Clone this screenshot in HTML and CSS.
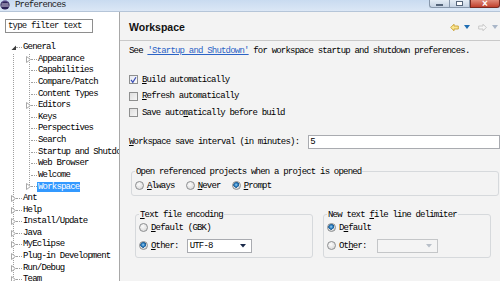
FILE: index.html
```html
<!DOCTYPE html>
<html>
<head>
<meta charset="utf-8">
<link rel="stylesheet" href="styles.css">
</head>
<body>
<div class="window">
  <div class="titlebar">
    <svg class="app-icon" width="10" height="10" viewBox="0 0 10 10"><circle cx="5" cy="5" r="4.6" fill="#2c2458"/><path d="M1.5 4 H8.5 M1.2 6 H8.8" stroke="#e8e4f4" stroke-width="0.9"/><path d="M2 2.2 A4 4 0 0 1 8 2.2" stroke="#8a7fc0" stroke-width="0.8" fill="none"/></svg>
    <span class="title">Preferences</span>
    <div class="controls">
      <span class="btn min"><span class="bar"></span></span>
      <span class="btn max"><span class="sq"></span></span>
      <span class="btn close">×</span>
    </div>
  </div>
  <div class="main">
    <div class="left">
      <div class="filter">type filter text</div>
      <div class="tree">
        <div class="row root">
          <svg class="twisty" width="5" height="7" viewBox="0 0 5 7"><path d="M5 1.5 L5 6 L0.5 6 Z" fill="#3a3a3a"/></svg>
          <span class="dash"></span><span class="label">General</span>
        </div>
        <div class="root-body">
          <div class="children">
            <div class="row child"><svg class="twisty" width="5" height="7" viewBox="0 0 5 7"><path d="M0.5 0.5 L4.5 3.5 L0.5 6.5 Z" fill="#fff" stroke="#a8a8a8"/></svg><span class="dash"></span><span class="label">Appearance</span></div>
            <div class="row child"><span class="twisty"></span><span class="dash"></span><span class="label">Capabilities</span></div>
            <div class="row child"><span class="twisty"></span><span class="dash"></span><span class="label">Compare/Patch</span></div>
            <div class="row child"><span class="twisty"></span><span class="dash"></span><span class="label">Content Types</span></div>
            <div class="row child"><svg class="twisty" width="5" height="7" viewBox="0 0 5 7"><path d="M0.5 0.5 L4.5 3.5 L0.5 6.5 Z" fill="#fff" stroke="#a8a8a8"/></svg><span class="dash"></span><span class="label">Editors</span></div>
            <div class="row child"><span class="twisty"></span><span class="dash"></span><span class="label">Keys</span></div>
            <div class="row child"><span class="twisty"></span><span class="dash"></span><span class="label">Perspectives</span></div>
            <div class="row child"><span class="twisty"></span><span class="dash"></span><span class="label">Search</span></div>
            <div class="row child"><span class="twisty"></span><span class="dash"></span><span class="label">Startup and Shutdown</span></div>
            <div class="row child"><span class="twisty"></span><span class="dash"></span><span class="label">Web Browser</span></div>
            <div class="row child"><span class="twisty"></span><span class="dash"></span><span class="label">Welcome</span></div>
            <div class="row child"><svg class="twisty" width="5" height="7" viewBox="0 0 5 7"><path d="M0.5 0.5 L4.5 3.5 L0.5 6.5 Z" fill="#fff" stroke="#a8a8a8"/></svg><span class="dash"></span><span class="label selected">Workspace</span></div>
          </div>
          <div class="row root"><svg class="twisty" width="5" height="7" viewBox="0 0 5 7"><path d="M0.5 0.5 L4.5 3.5 L0.5 6.5 Z" fill="#fff" stroke="#a8a8a8"/></svg><span class="dash"></span><span class="label">Ant</span></div>
          <div class="row root"><svg class="twisty" width="5" height="7" viewBox="0 0 5 7"><path d="M0.5 0.5 L4.5 3.5 L0.5 6.5 Z" fill="#fff" stroke="#a8a8a8"/></svg><span class="dash"></span><span class="label">Help</span></div>
          <div class="row root"><svg class="twisty" width="5" height="7" viewBox="0 0 5 7"><path d="M0.5 0.5 L4.5 3.5 L0.5 6.5 Z" fill="#fff" stroke="#a8a8a8"/></svg><span class="dash"></span><span class="label">Install/Update</span></div>
          <div class="row root"><svg class="twisty" width="5" height="7" viewBox="0 0 5 7"><path d="M0.5 0.5 L4.5 3.5 L0.5 6.5 Z" fill="#fff" stroke="#a8a8a8"/></svg><span class="dash"></span><span class="label">Java</span></div>
          <div class="row root"><svg class="twisty" width="5" height="7" viewBox="0 0 5 7"><path d="M0.5 0.5 L4.5 3.5 L0.5 6.5 Z" fill="#fff" stroke="#a8a8a8"/></svg><span class="dash"></span><span class="label">MyEclipse</span></div>
          <div class="row root"><svg class="twisty" width="5" height="7" viewBox="0 0 5 7"><path d="M0.5 0.5 L4.5 3.5 L0.5 6.5 Z" fill="#fff" stroke="#a8a8a8"/></svg><span class="dash"></span><span class="label">Plug-in Development</span></div>
          <div class="row root"><svg class="twisty" width="5" height="7" viewBox="0 0 5 7"><path d="M0.5 0.5 L4.5 3.5 L0.5 6.5 Z" fill="#fff" stroke="#a8a8a8"/></svg><span class="dash"></span><span class="label">Run/Debug</span></div>
          <div class="row root"><svg class="twisty" width="5" height="7" viewBox="0 0 5 7"><path d="M0.5 0.5 L4.5 3.5 L0.5 6.5 Z" fill="#fff" stroke="#a8a8a8"/></svg><span class="dash"></span><span class="label">Team</span></div>
        </div>
      </div>
    </div>
    <div class="right">
      <div class="header">
        <span class="heading">Workspace</span>
        <div class="nav">
          <svg width="9" height="9" viewBox="0 0 9 9"><path d="M0.7 4.5 L4 1.2 V3 H8.3 V6 H4 V7.8 Z" fill="#fbe690" stroke="#c9a032" stroke-width="0.9" stroke-linejoin="round"/></svg>
          <svg class="drop" width="6" height="4" viewBox="0 0 6 4"><path d="M0 0 H6 L3 4 Z" fill="#1f6db3"/></svg>
          <svg class="fwd" width="9" height="9" viewBox="0 0 9 9"><path d="M8.3 4.5 L5 1.2 V3 H0.7 V6 H5 V7.8 Z" fill="#f6f6f6" stroke="#c4c4c4" stroke-width="0.9" stroke-linejoin="round"/></svg>
          <svg class="drop" width="6" height="4" viewBox="0 0 6 4"><path d="M0 0 H6 L3 4 Z" fill="#a9b6c8"/></svg>
        </div>
      </div>
      <div class="content">
        <div class="line see">See <a class="link">'Startup and Shutdown'</a> for workspace startup and shutdown preferences.</div>
        <div class="line check first"><span class="cb checked"><svg width="8" height="8" viewBox="0 0 8 8"><path d="M1.2 3.8 L3.2 6.6 L6.8 0.8" fill="none" stroke="#3b4fb5" stroke-width="1.4"/></svg></span><span><u>B</u>uild automatically</span></div>
        <div class="line check"><span class="cb"></span><span><u>R</u>efresh automatically</span></div>
        <div class="line check"><span class="cb"></span><span>Save auto<u>m</u>atically before build</span></div>
        <div class="interval"><span><u>W</u>orkspace save interval (in minutes):</span><span class="input">5</span></div>
        <fieldset class="group g1">
          <legend>Open referenced projects when a project is opened</legend>
          <div class="radios">
            <span class="opt"><span class="radio"></span><u>A</u>lways</span>
            <span class="opt"><span class="radio"></span><u>N</u>ever</span>
            <span class="opt"><span class="radio on"></span><u>P</u>rompt</span>
          </div>
        </fieldset>
        <div class="groups">
          <fieldset class="group g2">
            <legend><u>T</u>ext file encoding</legend>
            <div class="opt r1"><span class="radio"></span><u>D</u>efault (GBK)</div>
            <div class="opt r2"><span class="radio on"></span><u>O</u>ther:<span class="combo">UTF-8<svg width="6" height="4" viewBox="0 0 6 4"><path d="M0 0 H6 L3 3.5 Z" fill="#1a2a4a"/></svg></span></div>
          </fieldset>
          <fieldset class="group g3">
            <legend>New text <u>f</u>ile line delimiter</legend>
            <div class="opt r1"><span class="radio on"></span>D<u>e</u>fault</div>
            <div class="opt r2"><span class="radio"></span>Ot<u>h</u>er:<span class="combo disabled"><svg width="6" height="4" viewBox="0 0 6 4"><path d="M0 0 H6 L3 3.5 Z" fill="#b8bfc8"/></svg></span></div>
          </fieldset>
        </div>
      </div>
    </div>
  </div>
</div>
</body>
</html>
```

FILE: styles.css
```css
* { box-sizing: border-box; }
html, body { margin: 0; padding: 0; }
body {
  width: 500px; height: 281px; overflow: hidden;
  background: #f3f3f3;
  font-family: "Liberation Mono", "DejaVu Sans Mono", monospace;
  font-size: 9px; letter-spacing: -0.8px; color: #000;
}
u { text-decoration: underline; text-underline-offset: 1px; }
.window { width: 500px; height: 281px; display: flex; flex-direction: column; }

.titlebar {
  height: 12px; flex: none; display: flex; align-items: flex-start;
  background: linear-gradient(#c9dbf0, #dbe7f6);
  border-bottom: 1px solid #b5c5d8;
}
.app-icon { margin-top: 0; flex: none; }
.title { margin-left: 5px; line-height: 11px; color: #1a1a1a; }
.controls { margin-left: auto; display: flex; height: 8px; }
.btn { height: 8px; display: flex; align-items: center; justify-content: center; }
.min, .max {
  width: 20px; background: linear-gradient(#e4ecf5, #c5d3e3);
  border: 1px solid #8797ab; border-top: none;
}
.min { border-radius: 0 0 0 3px; border-right: none; }
.max { width: 21px; }
.bar { width: 7px; height: 2px; border: 1px solid #55657a; background: #fff; margin-top: 2px; }
.sq { width: 7px; height: 5px; border: 1px solid #55657a; background: #fff; }
.close {
  width: 30px; background: linear-gradient(#e08a7a, #c0402e);
  border: 1px solid #7a2a22; border-top: none; border-radius: 0 0 3px 0;
  color: #fff; font-family: "Liberation Sans", sans-serif; font-weight: bold;
  font-size: 10px; line-height: 7px; letter-spacing: 0; overflow: hidden;
}

.main { flex: 1; display: flex; min-height: 0; }
.left {
  width: 120px; flex: none; background: #fff;
  border-right: 1px solid #a8a8a8;
  padding-top: 7px; overflow: hidden;
}
.filter {
  margin-left: 5px; width: 88px; height: 14px;
  border: 1px solid #8e8e8e; background: #fff;
  padding-left: 2px; line-height: 12px; color: #111;
}
.tree { margin-top: 9px; }
.row { display: flex; align-items: center; height: 11.6px; white-space: nowrap; }
.twisty { width: 5px; height: 7px; flex: none; }
.dash { width: 6px; flex: none; border-top: 1px dotted #a0a0a0; }
.label { margin-left: 1px; line-height: 11px; }
.root { padding-left: 11px; }
.child { padding-left: 26px; }
.root-body {
  background: repeating-linear-gradient(to bottom, #a0a0a0 0 1px, transparent 1px 2px) 13px 0 / 1px 100% no-repeat;
}
.children {
  background: repeating-linear-gradient(to bottom, #a0a0a0 0 1px, transparent 1px 2px) 29px 0 / 1px calc(100% - 6px) no-repeat;
}
.selected { background: #3399ff; color: #fff; padding: 0 1px; margin-left: 0; line-height: 10px; }

.right { flex: 1; display: flex; flex-direction: column; min-width: 0; }
.header {
  height: 29px; flex: none; display: flex; align-items: center;
  padding: 0 2px 0 9px; border-bottom: 1px solid #c9c9c9;
}
.heading {
  font-family: "Liberation Sans", Arial, sans-serif; font-weight: bold;
  font-size: 10.5px; letter-spacing: 0; color: #111; margin-top: 1px;
}
.nav { margin-left: auto; display: flex; align-items: center; gap: 5px; margin-top: 2px; }
.nav .fwd { margin-left: 3px; }
.content { padding: 4px 0 0 9px; }
.line { line-height: 12px; height: 12px; white-space: nowrap; }
.link { color: #2b63c6; text-decoration: underline; }
.check { display: flex; align-items: center; margin-top: 4.5px; }
.check.first { margin-top: 16.5px; }
.cb {
  width: 9px; height: 9px; flex: none; margin-right: 4px;
  border: 1px solid #8e8f8f; background: linear-gradient(135deg, #dedede, #f6f6f6);
  display: flex; align-items: center; justify-content: center;
}
.cb.checked { background: linear-gradient(135deg, #e8eaf2, #fafafa); }
.interval { margin-top: 16px; display: flex; align-items: center; height: 14px; white-space: nowrap; }
.input {
  margin-left: 9px; flex: 1; height: 14px; background: #fff;
  border: 1px solid #a9abb0; line-height: 12px; padding-left: 1px;
}
.group {
  margin: 0; border: 1px solid #d6d9dc; border-radius: 3px;
  padding: 0 3px 3px 3px; min-width: 0;
}
.group legend { padding: 0 1px; line-height: 12px; margin-left: 0; }
.g1 { margin: 17px 1px 0 2px; }
.radios { display: flex; align-items: center; height: 12px; margin-top: 2px; }
.opt { display: flex; align-items: center; white-space: nowrap; }
.radios .opt { margin-right: 11px; }
.radio {
  width: 9px; height: 9px; border-radius: 50%; flex: none; margin-right: 3px;
  border: 1px solid #8c8e90; background: radial-gradient(circle at 40% 35%, #fbfbfb, #d2d2d2);
  display: inline-block;
}
.radio.on {
  background: radial-gradient(circle at 45% 40%, #9fd3f4 0, #2e7fc0 1.6px, #1b5b94 2.7px, #e8e8e8 3px, #d5d5d5 4px);
}
.groups { display: flex; margin: 13px 9px 0 6px; gap: 10px; }
.g2 { width: 178px; padding-bottom: 4px; }
.g3 { flex: 1; padding-bottom: 4px; }
.r1 { height: 12px; margin-top: 1px; }
.r2 { height: 14px; margin-top: 5px; }
.combo {
  height: 14px; border: 1px solid #a9abb0; background: #fff;
  display: flex; align-items: center; justify-content: space-between;
  padding: 0 5px 0 2px; line-height: 12px;
}
.g2 .combo { width: 65px; margin-left: 8px; }
.g3 .combo { width: 61px; margin-left: 10px; }
.combo.disabled { background: #f4f4f4; border-color: #c4c6c8; justify-content: flex-end; }
```
